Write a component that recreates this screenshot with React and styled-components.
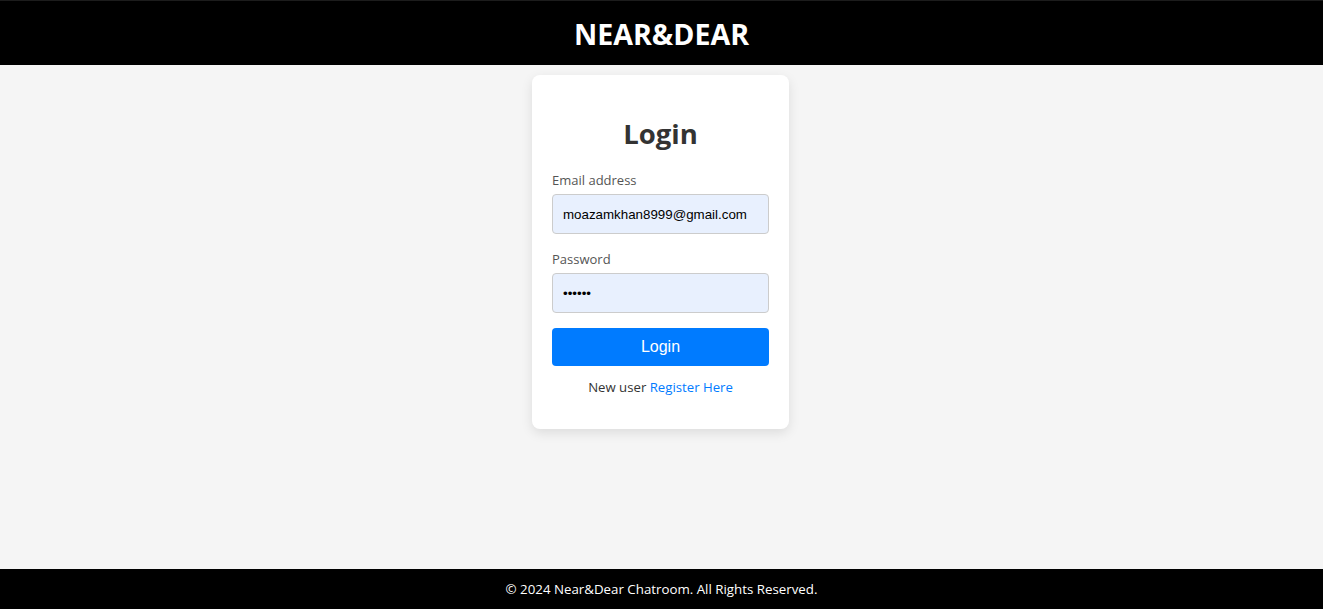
import React from 'react';
import styled, { createGlobalStyle } from 'styled-components';

const GlobalStyle = createGlobalStyle`
    * { box-sizing: border-box; }
    html, body { margin: 0; padding: 0; }
    body {
        font-family: "Open Sans", "Noto Sans", sans-serif;
        background-color: #f5f5f5;
    }
`

export default function App() {
    return (
        <Page>
            <GlobalStyle />
            <Header>
                <Brand>NEAR&amp;DEAR</Brand>
            </Header>

            <Main>
                <Card>
                    <Title>Login</Title>

                    <Field>
                        <Label>Email address</Label>
                        <Input type='email' readOnly value='moazamkhan8999@gmail.com' />
                    </Field>

                    <Field>
                        <Label>Password</Label>
                        <Input type='password' readOnly value='123456' />
                    </Field>

                    <SubmitButton type='button'>Login</SubmitButton>

                    <SignupText>
                        New user <SignupLink href='#'>Register Here</SignupLink>
                    </SignupText>
                </Card>
            </Main>

            <Footer>© 2024 Near&amp;Dear Chatroom. All Rights Reserved.</Footer>
        </Page>
    )
}

const Page = styled.div`
    min-height: 100vh;
    display: flex;
    flex-direction: column;
`
const Header = styled.header`
    height: 65px;
    background-color: #000;
    border-top: 1px solid #1c1c1c;
    display: flex;
    align-items: center;
    justify-content: center;
`
const Brand = styled.h1`
    margin: 0;
    color: #fff;
    font-size: 28.6px;
    font-weight: 700;
`
const Main = styled.main`
    flex-grow: 1;
    display: flex;
    justify-content: center;
    align-items: flex-start;
    padding-top: 10px;
    padding-right: 2px;
`
const Card = styled.div`
    width: 257px;
    background-color: #fff;
    border-radius: 8px;
    box-shadow: 0 4px 12px rgba(0, 0, 0, 0.1);
    padding: 20px 20px 32px;
    display: flex;
    flex-direction: column;
`
const Title = styled.h2`
    margin: 22px 0 19px;
    text-align: center;
    font-size: 27.5px;
    line-height: 34px;
    font-weight: 700;
    color: #333;
`
const Field = styled.div`
    display: flex;
    flex-direction: column;
    margin-bottom: 15px;
`
const Label = styled.label`
    font-size: 13px;
    line-height: 20px;
    color: #555;
    margin-bottom: 4px;
`
const Input = styled.input`
    height: 40px;
    width: 100%;
    padding: 0 10px;
    border: 1px solid #ccc;
    border-radius: 4px;
    background-color: #e8f0fe;
    font-family: "Liberation Sans", Arial, sans-serif;
    font-size: 13.33px;
    color: #000;
    outline: none;
`
const SubmitButton = styled.button`
    height: 38px;
    width: 100%;
    border: 0;
    border-radius: 4px;
    background-color: #007bff;
    color: #fff;
    font-family: "Liberation Sans", Arial, sans-serif;
    font-size: 16px;
    cursor: pointer;
`
const SignupText = styled.p`
    margin: 11px 0 0;
    text-align: center;
    font-size: 13.2px;
    line-height: 20px;
    color: #333;
`
const SignupLink = styled.a`
    color: #007bff;
    text-decoration: none;
`
const Footer = styled.footer`
    height: 40px;
    background-color: #000;
    color: #fff;
    font-size: 13.3px;
    display: flex;
    align-items: center;
    justify-content: center;
`
